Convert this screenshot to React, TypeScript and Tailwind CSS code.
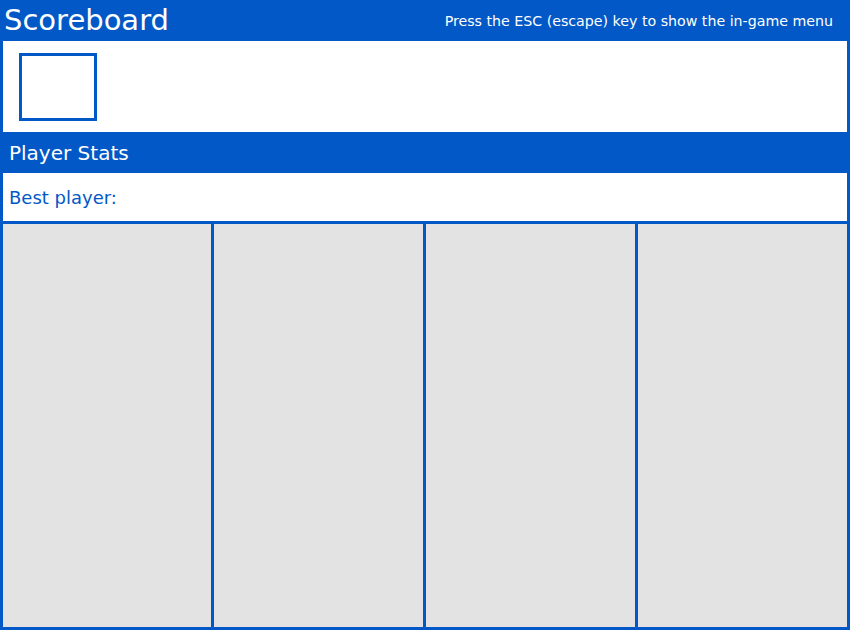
export default function App() {
  return (
    <div className="flex h-[630px] w-[850px] flex-col border-x-[3px] border-b-[3px] border-[#0258c6] bg-white font-['DejaVu_Sans',sans-serif]">
      <div className="-mx-[3px] flex h-[41px] items-center justify-between bg-[#0258c6] pl-[4px] pr-[17px] text-white">
        <h1 className="text-[29px] leading-none">Scoreboard</h1>
        <p className="mt-[2px] text-[14.2px]">Press the ESC (escape) key to show the in-game menu</p>
      </div>
      <div className="h-[91px] pl-[16px] pt-[12px]">
        <div className="h-[68px] w-[78px] border-[3px] border-[#0258c6]" />
      </div>
      <div className="flex h-[41px] items-center bg-[#0258c6] pl-[6px] text-[20px] text-white">Player Stats</div>
      <div className="flex h-[51px] items-center border-b-[3px] border-[#0258c6] pl-[6px] text-[18px] text-[#0258c6]">
        Best player:
      </div>
      <div className="grid flex-1 grid-cols-[211px_212px_212px_1fr] bg-[#e3e3e3]">
        <div className="border-r-[3px] border-[#0258c6]" />
        <div className="border-r-[3px] border-[#0258c6]" />
        <div className="border-r-[3px] border-[#0258c6]" />
        <div />
      </div>
    </div>
  );
}
